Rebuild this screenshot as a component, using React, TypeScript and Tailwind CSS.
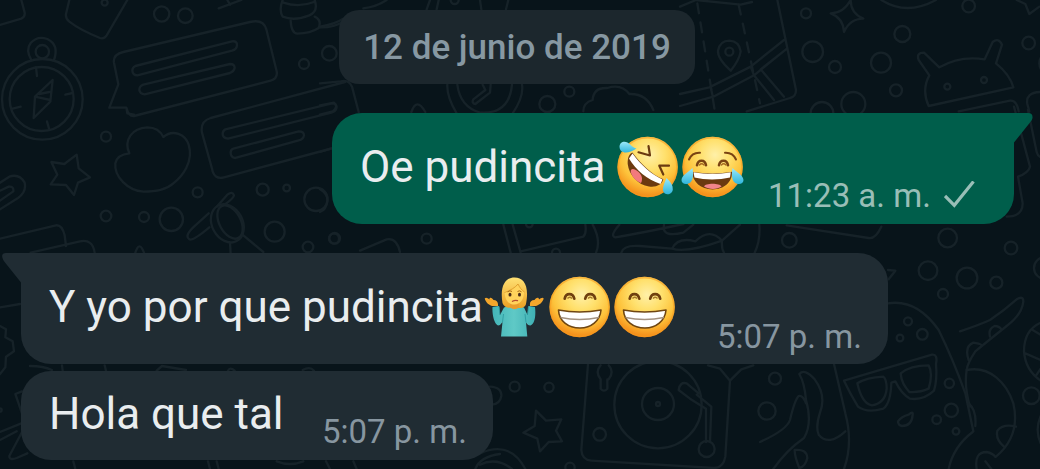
import type { ReactNode } from 'react';

type Dot = [number, number, number];

function Dots({ items }: { items: Dot[] }) {
  return (
    <>
      {items.map(([x, y, r]) => (
        <circle key={`${x}-${y}`} cx={x} cy={y} r={r} />
      ))}
    </>
  );
}

/* Doodle wallpaper. Each group is drawn on a grid three times finer than the page. */
function Wallpaper() {
  return (
    <svg
      className="absolute inset-0"
      width="1040"
      height="469"
      viewBox="0 0 1040 469"
      fill="none"
      stroke="#162228"
      strokeLinecap="round"
      strokeLinejoin="round"
      strokeWidth="7"
      aria-hidden="true"
    >
      <g transform="scale(.33333)">
        <path d="M64 0 74 38Q76 50 64 56L0 75M208 0 198 42Q196 56 208 65 240 90 300 114 312 118 320 106L382 0" />
        <circle cx="127" cy="298" r="121" />
        <circle cx="125" cy="297" r="96" />
        <circle cx="127" cy="155" r="20" />
        <path d="M94 180Q76 150 92 129 112 106 142 117 178 134 162 180M108 202 111 228M196 284 218 279M38 326 62 320M141 364 147 386M158 240 105 290 101 354 151 305ZM105 290 151 300M118 282 148 276M158 240 151 305" />
        <path d="M402 344 382 340 379 323 328 323 355 253 342 188Q338 164 370 156L750 66Q790 56 799 88L830 214Q834 236 812 242L402 348Q386 350 379 323" />
        <path d="M406 198 696 124Q712 122 711 136 710 148 696 152L412 226Q398 226 397 212 397 202 406 198ZM430 254 690 192Q704 192 704 204 702 214 690 219L434 283Q420 282 418 270 418 258 430 254Z" />
        <path d="M388 460C370 420 396 384 442 382 466 382 482 394 490 411 520 386 556 404 566 434 582 486 546 530 520 550 496 572 460 575 430 575 384 572 342 530 346 490 350 470 368 462 388 460Z" />
        <path d="M230 464 236 505 270 532 234 548 222 585 198 555 152 553 172 524 154 486 193 492Z" />
        <path d="M0 548 28 530Q58 520 74 548 80 576 54 594L0 628M0 572 26 560Q42 558 40 574L0 602" />
        <path d="M1035 246 632 354Q600 364 606 398L636 506Q642 540 672 532L1000 444" />
        <path d="M676 388 996 310Q1010 310 1010 322 1008 334 994 338L684 416Q668 414 668 402 668 392 676 388ZM700 446 896 394Q912 394 912 406 910 418 896 421L706 474Q692 472 692 458 692 448 700 446Z" />
        <path d="M0 716 168 676Q186 674 194 706L198 738M92 758 240 724Q278 716 284 758M406 758Q418 720 432 758" />
        <path d="M626 640 582 680Q552 708 568 718 578 724 628 682M650 620 682 584Q698 572 702 586 702 594 674 614M690 728 692 762M730 706 790 756" />
        <ellipse cx="682" cy="670" rx="46" ry="60" transform="rotate(-28 682 670)" />
        <ellipse cx="690" cy="666" rx="32" ry="54" transform="rotate(-28 690 666)" />
        <path d="M656 25 724 0M682 0 690 14M848 0Q836 30 848 50 884 64 928 46 956 34 944 0M850 8Q896 24 942 6M872 62Q874 100 892 101 932 100 956 84 966 60 944 50M956 82Q1000 84 1035 62" />
        <Dots
          items={[
            [314, 8, 9], [485, 42, 23], [556, 47, 22], [912, 192, 15], [988, 160, 22], [318, 410, 15],
            [593, 577, 15], [788, 569, 18], [860, 564, 10], [948, 598, 35], [318, 648, 16], [432, 651, 15],
            [514, 658, 35], [824, 695, 30], [1002, 716, 15], [924, 741, 16], [1280, 716, 15],
          ]}
        />
      </g>
      <g transform="translate(320) scale(.33333)">
        <path d="M0 80Q45 72 70 56M130 25Q170 20 200 0M320 28 330 0M350 28 356 0M480 0 484 28M565 0 558 28" />
        <path d="M382 254Q380 290 410 340M606 254Q612 290 578 340M412 254Q420 320 480 338 568 344 576 254M488 254 496 270 460 298Q454 310 466 312L510 278 512 254M274 336Q290 290 316 336" />
        <path d="M790 334Q790 308 818 300 820 262 862 264 904 250 928 282 980 280 1000 330M0 250 62 244Q86 238 96 260L116 336M0 316 42 308Q56 320 38 334L0 344" />
        <path d="M120 752 200 718Q230 712 240 756M0 456 32 446M0 568Q22 580 22 600 20 630 0 636" />
        <Dots items={[[404, 0, 12], [682, 312, 24], [748, 275, 15], [44, 715, 16]]} />
      </g>
      <g transform="translate(680) scale(.33333)">
        <path d="M0 20 48 0 182 14 216 6M292 0 348 270Q348 290 330 294L200 334M0 282 88 262 212 200 312 120M0 318 100 290 222 226 318 148M212 200 222 226 282 300M242 208 312 290M242 208 318 148M92 262 98 288" />
        <path d="M52 10 104 330" strokeDasharray="30 28" />
        <path d="M176 14 240 310" strokeDasharray="30 28" />
        <path d="M152 212Q112 176 114 152 120 122 148 122 178 124 182 154 178 180 152 212Z" />
        <path d="M512 0Q512 40 550 56 510 56 492 96 490 54 452 40 490 40 512 0M604 0Q680 48 768 0M1010 0 1036 12 1048 42 1078 20" />
        <path d="M746 318Q724 270 748 226L716 180Q708 158 732 158L778 202Q840 166 914 178L938 126Q956 112 966 134L948 190Q990 224 1000 262ZM836 334 990 302Q1010 300 1016 334M1080 276Q1036 278 1042 312L1048 334" />
        <Dots
          items={[
            [148, 155, 12], [378, 40, 15], [398, 155, 31], [465, 201, 18], [603, 188, 30], [667, 102, 24],
            [648, 271, 18], [866, 18, 19], [1046, 129, 19], [802, 260, 9], [912, 240, 9], [426, 340, 34],
            [520, 312, 36], [1112, 190, 34],
          ]}
        />
      </g>
      <g transform="translate(960) scale(.33333)">
        <path d="M162 320 210 500Q206 518 174 530L188 610Q188 650 140 650M204 330 230 456Q232 466 242 472" />
        <path d="M0 994Q60 974 90 960 134 930 170 898 190 886 190 904 186 944 140 978 70 1034 46 1054 22 1090 20 1110M26 1210Q50 1230 46 1278" />
        <path d="M90 1010Q84 986 104 978 118 978 124 988M26 1080Q12 1040 40 1028 58 1030 66 1036M132 1340Q106 1318 112 1292 130 1270 168 1280M50 1407Q42 1356 80 1356 98 1360 106 1370M76 1384 94 1407M20 1110C90 1096 140 1150 160 1210 176 1280 156 1330 108 1370M20 1110Q12 1160 30 1220M242 968Q192 990 192 1054 196 1110 242 1142M218 990 242 1004M196 1060 242 1080M230 1124 242 1106M242 1248Q224 1290 242 1330" />
        <Dots items={[[153, 744, 19], [109, 848, 18], [254, 804, 32], [214, 1187, 25]]} />
      </g>
      <g transform="translate(480 210) scale(.33333)">
        <path d="M70 44 92 128M98 44 122 128M122 124 310 80Q320 70 316 44M338 44Q364 92 348 128M418 44Q388 78 406 82 480 70 610 42M552 44Q544 84 610 68L640 44M424 128Q430 104 480 108L576 116Q594 80 646 94 690 52 726 92L780 44M576 116Q620 130 726 92 724 116 732 128M838 44Q842 90 824 128M920 46 1166 84Q1186 88 1204 50" />
        <Dots items={[[228, 128, 12], [148, 42, 10]]} />
      </g>
      <g transform="translate(480 350) scale(.33333)">
        <path d="M324 42 304 300Q306 330 334 332L702 354Q730 354 736 320L750 92 784 58 820 46M684 46 720 56 750 92" />
        <circle cx="534" cy="164" r="131" />
        <circle cx="534" cy="162" r="48" />
        <circle cx="534" cy="162" r="6" />
        <path d="M656 130 620 100Q600 94 596 120L630 146 678 176 678 276M650 134 694 170 690 276M362 88Q344 66 362 46M386 88Q404 66 386 46M362 88 362 116Q372 128 382 116L382 88" />
        <path d="M168 182 198 212 244 208 228 242 246 274 206 276 180 304 172 266 130 248 164 228Z" />
        <path d="M0 310Q90 270 136 357M0 344Q50 320 96 357M30 110Q66 112 64 138 60 162 36 164" />
        <Dots items={[[104, 110, 15], [207, 112, 14], [359, 253, 19], [680, 297, 24], [270, 352, 14]]} />
      </g>
      <g transform="translate(760 210) scale(.33333)">
        <path d="M384 280Q470 266 536 360 580 450 616 550L640 664M222 462 256 610Q280 700 252 777M638 666Q580 710 566 777M384 180 406 182 386 208" />
        <path d="M252 512 516 434Q534 432 528 462 532 510 522 542 490 572 450 566 424 552 406 514L394 518Q392 580 370 596 320 610 294 590 270 550 252 512Z" />
        <path d="M292 520Q320 502 370 500 380 508 380 536 376 580 336 586 306 582 292 520ZM422 490Q450 466 506 466 520 490 506 536 480 548 448 546 424 520 422 490Z" />
        <path d="M414 634Q424 620 446 614 460 602 458 614 456 648 426 648 414 646 414 634ZM118 492Q134 474 164 508 200 556 180 608 166 650 176 674 206 710 256 664M118 492Q134 520 138 570 158 640 132 684 80 720 40 777M0 696Q80 660 90 630 104 570 116 558 128 554 138 580M104 720Q140 716 142 744 136 770 118 774 104 740 104 720" />
        <Dots
          items={[
            [88, 91, 22], [563, 84, 28], [504, 182, 28], [621, 204, 31], [549, 252, 15], [444, 334, 12],
            [487, 373, 16], [420, 384, 10], [45, 506, 18], [21, 603, 26], [568, 520, 14], [574, 601, 20],
            [530, 629, 13], [588, 664, 10],
          ]}
        />
      </g>
      <g transform="translate(0 240) scale(.33333)">
        <path d="M0 202 60 192M0 258 18 268 16 292 38 304 42 334 18 350 16 382 0 402M90 378Q130 378 156 390M186 376 188 392M314 376 318 392M470 392 486 378 558 390M684 392Q690 380 704 392M908 390Q930 378 942 392" />
        <path d="M66 454 46 462 66 520M0 576 64 550M0 600 50 574M66 576 28 648Q28 662 50 654L82 640M220 664 226 687M624 664 630 687M650 664 656 687M830 664Q870 680 910 664M978 664 990 687M1060 664 1070 687M1426 687Q1440 650 1500 642" />
        <circle cx="0" cy="510" r="5" />
      </g>
    </svg>
  );
}

function EmojiFrame({ label, children }: { label: string; children: ReactNode }) {
  return (
    <svg className="h-[62px] w-[65px] shrink-0 overflow-visible" viewBox="0 0 65 62" role="img" aria-label={label}>
      <defs>
        <radialGradient id="face" cx=".54" cy=".3" r=".72">
          <stop offset="0" stopColor="#fff0a8" />
          <stop offset=".35" stopColor="#ffe06c" />
          <stop offset=".68" stopColor="#fdc23a" />
          <stop offset="1" stopColor="#f38414" />
        </radialGradient>
        <linearGradient id="tear" x1="0" y1="0" x2="0" y2="1">
          <stop offset="0" stopColor="#9be9fa" />
          <stop offset="1" stopColor="#2fb5dc" />
        </linearGradient>
        <linearGradient id="hair" x1="0" y1="0" x2="0" y2="1">
          <stop offset="0" stopColor="#ffe174" />
          <stop offset="1" stopColor="#eba023" />
        </linearGradient>
        <linearGradient id="shirt" x1="0" y1="0" x2="1" y2="0">
          <stop offset="0" stopColor="#43b5b8" />
          <stop offset=".5" stopColor="#5fc9c6" />
          <stop offset="1" stopColor="#3fb0b4" />
        </linearGradient>
      </defs>
      {children}
    </svg>
  );
}

function Face() {
  return (
    <>
      <circle cx="32.6" cy="31" r="30.2" fill="url(#face)" />
      <circle cx="32.6" cy="31" r="29.4" fill="none" stroke="#f59a1f" strokeOpacity=".55" strokeWidth="1.6" />
    </>
  );
}

function Rofl() {
  return (
    <EmojiFrame label="Rodando de risa">
      <Face />
      <path d="M17.3 16.5C27 29 36 38 48.300 43.300 47 49 41 51.500 34 50.500 23 49 14 39 12.700 28 12.500 22 14 18 17.300 16.500Z" fill="#6b3a10" />
      <path d="M17.5 17.500C26 29 36 38 47.500 43.500L45.500 48C32 43.500 21 34 14 22.500Z" fill="#fff" />
      <path d="M16 37C14.500 32 19 32 23 35.500 27 39 28 43 26 47 21 45 18 42 16 37Z" fill="#f2797c" />
      <g fill="none" stroke="#6b3a10" strokeWidth="2.2" strokeLinecap="round" strokeLinejoin="round">
        <path d="M33.5 10 35 19.500 23.500 16.300M54 29.700 44.300 29.700 48.300 38.500" />
      </g>
      <path d="M4.500 11C4.500 6 9 4.500 12.500 6.500 15.500 8 17 11.500 21.500 12.500 17 15.500 13 17 9.500 16.500 6.500 16 4.600 14 4.500 11Z" fill="url(#tear)" />
      <path d="M51.500 42C56 46 58 49.500 57.800 53.500 57.500 57.500 53 59.500 49.800 57.500 46 54 49 48 51.500 42Z" fill="url(#tear)" />
    </EmojiFrame>
  );
}

function Joy() {
  return (
    <EmojiFrame label="Llorando de risa">
      <Face />
      <path d="M12 35.800C26 38 39 38 52 35.800 52.500 46 44 53.500 32.500 53.500 21 53.500 12.500 46 12 35.800Z" fill="#6b3a10" />
      <path d="M13.500 36.300C27 38.300 38 38.300 50.800 36.300L50 41.500C39 44 25 44 14.500 41.500Z" fill="#fff" />
      <path d="M24 50.500C25 46.700 40 46.700 41.500 50.500 37 53.800 29 53.800 24 50.500Z" fill="#f2858a" />
      <g fill="none" stroke="#7a4312" strokeLinecap="round">
        <path d="M9 23.500C11 19 15 16.500 20 16.800M56 23.500C54 19 50 16.500 45 16.800" strokeWidth="2" />
        <path d="M17 29.300C18 23.300 25 23.300 26 29.300M39 29.300C40 23.300 47 23.300 48 29.300" strokeWidth="2.600" />
        <path d="M19.500 29Q21.500 26.500 24 29M41.500 29Q43.500 26.500 46 29" strokeWidth="1.300" stroke="#a66a20" />
      </g>
      <path d="M12.500 32C13.500 37 13.500 43 10.800 46 7.500 49.500 1.500 48.500 1.500 44 2 39 7.500 37 12.500 32Z" fill="url(#tear)" />
      <path d="M52.500 32C51.500 37 51.500 43 54.200 46 57.500 49.500 63.500 48.500 63.500 44 63 39 57.500 37 52.500 32Z" fill="url(#tear)" />
    </EmojiFrame>
  );
}

function Beaming() {
  return (
    <EmojiFrame label="Sonrisa radiante">
      <Face />
      <path d="M11.500 34C25 36.500 40 36.500 54 34 53 45 44 52 33 52 21 52 12 45 11.500 34Z" fill="#fff" stroke="#6f4612" strokeWidth="1.600" strokeLinejoin="round" />
      <path d="M13.500 41.500C26 44 39 44 52 41.500" fill="none" stroke="#a39281" strokeWidth="1.500" />
      <path d="M17.700 22.700C18.700 16.700 26 16.700 27.300 22.700M38.200 22.700C39.500 16.700 46.800 16.700 48.200 22.700" fill="none" stroke="#70400f" strokeWidth="2.700" strokeLinecap="round" />
      <path d="M20.500 22.500Q22.500 20 25 22.500M41 22.500Q43.500 20 45.500 22.500" fill="none" stroke="#a87929" strokeWidth="1.400" />
    </EmojiFrame>
  );
}

function Shrug() {
  return (
    <EmojiFrame label="Mujer encogida de hombros">
      <path d="M10.500 31 17 30 18 39 22 31.500Q32 27.500 42 31.500L45.500 39 46.500 30 53 31C54 39 53 48 48.500 49.500 46 49.500 45.500 48.500 44 46.500L45.300 60.500H19L20.500 46C18.500 48.500 18 49.500 16 49.500 12 47.500 10 38 10.500 31Z" fill="url(#shirt)" />
      <path d="M20.500 46 21.500 38M44 46.500 43 38M17 30.500 18 39M46.500 30.500 45.500 39" stroke="#2c9ca2" strokeWidth=".9" fill="none" />
      <path d="M10.500 30C7 29.500 3.500 26 2.700 22.500 4 21 5.500 22 7.500 23.500 7 21 9.500 21 11.500 24 14.500 24 16.500 26 16 30ZM53.500 30C57 29.500 61 26 61.700 22.500 60.500 21 59 22 57 23.500 57 21 54.500 21 52.500 24 49 24 47.500 26 48 30Z" fill="#f4a62b" />
      <path d="M20.500 27C17.500 9 24 1.500 32.500 1.500 42 1.500 47.500 10 44 28 42.500 33 37 32 32.500 32 27 32 22.500 32 20.500 27Z" fill="url(#hair)" />
      <path d="M28 26H37V31.500Q32.500 35 28 31.500Z" fill="#e89c2c" />
      <path d="M22.800 15C28 14.500 33 12 36 8.500 38 12 39.500 13.500 42 15 42.500 23 38.500 28.500 32.500 28.500 26 28.500 22.300 23 22.800 15Z" fill="#ffd35c" />
      <path d="M22.500 16.500C28 14.500 33 12 36 8 38 12 39.500 14 42.500 16" fill="none" stroke="#d99526" strokeWidth=".8" />
      <ellipse cx="28" cy="18.700" rx="1.500" ry="1.900" fill="#4b2b15" />
      <ellipse cx="37.500" cy="18.700" rx="1.500" ry="1.900" fill="#4b2b15" />
      <path d="M25.500 15.800Q28 14 30 15.500M35.500 15.500Q37.500 14 39.500 15.800" fill="none" stroke="#a86a19" strokeWidth="1" />
      <path d="M30.500 25.300Q33 23.800 35.500 24.700" fill="none" stroke="#b74d2c" strokeWidth="1.300" strokeLinecap="round" />
    </EmojiFrame>
  );
}

export default function App() {
  return (
    <main className="relative h-[469px] w-[1040px] overflow-hidden bg-[#08141a] font-[Roboto,sans-serif]">
      <Wallpaper />
      <div className="relative flex flex-col pt-[10px]">
        <div className="ml-[339px] flex h-[74px] w-[356px] justify-center rounded-[20px] bg-[#1c272d]">
          <span className="whitespace-nowrap text-[35px] leading-[76px] font-medium text-[#8798a2]">12 de junio de 2019</span>
        </div>

        <article className="relative mt-[29px] ml-[332px] flex h-[111px] w-[682px] rounded-[30px] rounded-tr-none bg-[#005e4b] pl-[28px]">
          <svg className="absolute top-0 left-[681px]" width="20" height="31" viewBox="0 0 20 31" aria-hidden="true">
            <path d="M0 0H15Q20 0 19.500 5 19.400 7 17 9.500L1 29.500H0Z" fill="#005e4b" />
          </svg>
          <p className="mt-[28px] w-[255px] shrink-0 whitespace-nowrap text-[44px] leading-[52px] text-[#e9edef]">Oe pudincita</p>
          <div className="mt-[23px] flex">
            <Rofl />
            <Joy />
          </div>
          <div className="mt-[63px] ml-[23px] flex h-[40px] items-center">
            <time className="w-[176px] whitespace-nowrap text-[33px] leading-[40px] text-[#99beb7]">11:23 a. m.</time>
            <svg className="h-[30px] w-[32px]" viewBox="0 0 32 30" aria-hidden="true">
              <path d="M1 15 10.300 24.300 29.500 0.500" fill="none" stroke="#99beb7" strokeWidth="3.200" />
            </svg>
          </div>
        </article>

        <article className="relative mt-[29px] ml-[21px] flex h-[111px] w-[867px] rounded-[30px] rounded-tl-none bg-[#202c33] pl-[28px]">
          <svg className="absolute top-0 -left-[19px]" width="20" height="31" viewBox="0 0 20 31" aria-hidden="true">
            <path d="M20 0H4Q-1 0 .5 5 .8 7 3 9.500L19 29.500H20Z" fill="#202c33" />
          </svg>
          <p className="mt-[28px] w-[433px] shrink-0 whitespace-nowrap text-[44px] leading-[52px] text-[#e9edef]">Y yo por que pudincita</p>
          <div className="mt-[23px] flex">
            <Shrug />
            <Beaming />
            <Beaming />
          </div>
          <time className="mt-[64px] ml-[40px] h-[40px] whitespace-nowrap text-[33px] leading-[40px] text-[#8796a0]">5:07 p. m.</time>
        </article>

        <article className="mt-[7px] ml-[21px] flex h-[89px] w-[472px] rounded-[30px] bg-[#202c33] pl-[28px]">
          <p className="mt-[17px] w-[273px] shrink-0 whitespace-nowrap text-[44px] leading-[52px] text-[#e9edef]">Hola que tal</p>
          <time className="mt-[41px] h-[40px] whitespace-nowrap text-[33px] leading-[40px] text-[#8796a0]">5:07 p. m.</time>
        </article>
      </div>
    </main>
  );
}
